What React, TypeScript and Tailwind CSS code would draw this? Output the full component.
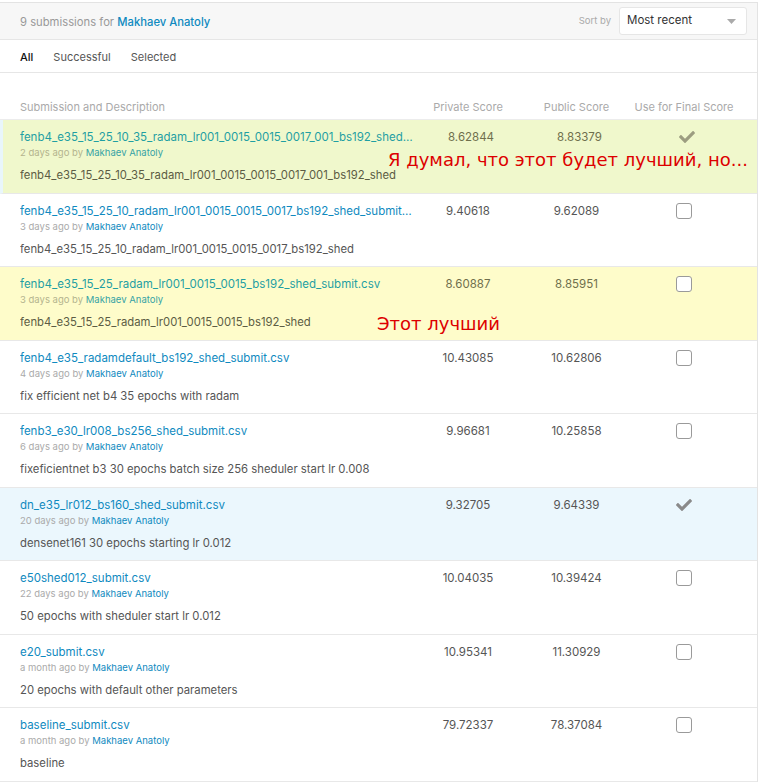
import React from "react";
import { FaCheck } from "react-icons/fa";

type Submission = {
  file: string;
  ago: string;
  description: string;
  privateScore: string;
  publicScore: string;
  selected: boolean;
  tone: "green" | "yellow" | "blue" | "none";
  note?: { text: string; className: string };
};

const submissions: Submission[] = [
  {
    file: "fenb4_e35_15_25_10_35_radam_lr001_0015_0015_0017_001_bs192_shed_submit.csv",
    ago: "2 days ago",
    description: "fenb4_e35_15_25_10_35_radam_lr001_0015_0015_0017_001_bs192_shed",
    privateScore: "8.62844",
    publicScore: "8.83379",
    selected: true,
    tone: "green",
    note: { text: "Я думал, что этот будет лучший, но...", className: "left-[385px] top-[30px]" },
  },
  {
    file: "fenb4_e35_15_25_10_radam_lr001_0015_0015_0017_bs192_shed_submit.csv",
    ago: "3 days ago",
    description: "fenb4_e35_15_25_10_radam_lr001_0015_0015_0017_bs192_shed",
    privateScore: "9.40618",
    publicScore: "9.62089",
    selected: false,
    tone: "none",
  },
  {
    file: "fenb4_e35_15_25_radam_lr001_0015_0015_bs192_shed_submit.csv",
    ago: "3 days ago",
    description: "fenb4_e35_15_25_radam_lr001_0015_0015_bs192_shed",
    privateScore: "8.60887",
    publicScore: "8.85951",
    selected: false,
    tone: "yellow",
    note: { text: "Этот лучший", className: "left-[377px] top-[47px]" },
  },
  {
    file: "fenb4_e35_radamdefault_bs192_shed_submit.csv",
    ago: "4 days ago",
    description: "fix efficient net b4 35 epochs with radam",
    privateScore: "10.43085",
    publicScore: "10.62806",
    selected: false,
    tone: "none",
  },
  {
    file: "fenb3_e30_lr008_bs256_shed_submit.csv",
    ago: "6 days ago",
    description: "fixeficientnet b3 30 epochs batch size 256 sheduler start lr 0.008",
    privateScore: "9.96681",
    publicScore: "10.25858",
    selected: false,
    tone: "none",
  },
  {
    file: "dn_e35_lr012_bs160_shed_submit.csv",
    ago: "20 days ago",
    description: "densenet161 30 epochs starting lr 0.012",
    privateScore: "9.32705",
    publicScore: "9.64339",
    selected: true,
    tone: "blue",
  },
  {
    file: "e50shed012_submit.csv",
    ago: "22 days ago",
    description: "50 epochs with sheduler start lr 0.012",
    privateScore: "10.04035",
    publicScore: "10.39424",
    selected: false,
    tone: "none",
  },
  {
    file: "e20_submit.csv",
    ago: "a month ago",
    description: "20 epochs with default other parameters",
    privateScore: "10.95341",
    publicScore: "11.30929",
    selected: false,
    tone: "none",
  },
  {
    file: "baseline_submit.csv",
    ago: "a month ago",
    description: "baseline",
    privateScore: "79.72337",
    publicScore: "78.37084",
    selected: false,
    tone: "none",
  },
];

function SubmissionRow({ s }: { s: Submission }) {
  const highlighted = s.tone === "green" || s.tone === "yellow";
  const bg =
    s.tone === "green"
      ? "bg-[#f0f8cc] border-l-[3px] border-l-[#e9f6fb]"
      : s.tone === "yellow"
      ? "bg-[#fefcca]"
      : s.tone === "blue"
      ? "bg-[#ebf7fd]"
      : "bg-white";

  return (
    <div className={`relative flex h-[73.5px] border-b border-[#e8e8e8] ${bg}`}>
      <div className={`w-[413px] min-w-0 pt-[9px] ${s.tone === "green" ? "pl-[17px]" : "pl-[20px]"}`}>
        <div
          className={`truncate text-[11.5px] leading-[16px] ${
            highlighted ? "text-[#1f9fa3]" : "text-[#0f8ac0]"
          }`}
        >
          {s.file}
        </div>
        <div className={`mt-[1px] text-[9.5px] leading-[14px] ${highlighted ? "text-[#b4b48e]" : "text-[#aaaaaa]"}`}>
          {s.ago} by{" "}
          <span className={highlighted ? "text-[#36a3a5]" : "text-[#0f8ac0]"}>Makhaev Anatoly</span>
        </div>
        <div className={`mt-[7px] truncate text-[11.3px] leading-[16px] ${highlighted ? "text-[#5c5c44]" : "text-[#555555]"}`}>
          {s.description}
        </div>
      </div>
      <div className={`w-[110px] pt-[9px] text-center text-[11.5px] leading-[16px] ${highlighted ? "text-[#6f6f4c]" : "text-[#555555]"}`}>
        {s.privateScore}
      </div>
      <div className={`w-[107px] pt-[9px] text-center text-[11.5px] leading-[16px] ${highlighted ? "text-[#6f6f4c]" : "text-[#555555]"}`}>
        {s.publicScore}
      </div>
      <div className="flex w-[107px] justify-center pt-[9px]">
        {s.selected ? (
          <FaCheck className={`h-[16px] w-[18px] ${highlighted ? "text-[#9c9d80]" : "text-[#8a8a8a]"}`} />
        ) : (
          <div className="h-[16px] w-[16px] rounded-[3px] border-[1.5px] border-[#9a9a9a] bg-white" />
        )}
      </div>
      {s.note && (
        <div
          className={`absolute whitespace-nowrap text-[18px] leading-[20px] text-[#dd0000] ${s.note.className}`}
          style={{ fontFamily: '"DejaVu Sans", sans-serif' }}
        >
          {s.note.text}
        </div>
      )}
    </div>
  );
}

export default function App() {
  return (
    <div
      className="min-h-[783px] bg-white pt-[2px]"
      style={{ fontFamily: "Inter, 'Noto Sans', sans-serif" }}
    >
      <div className="w-[758px] border-t border-r border-[#e3e3e3]">
        {/* Header */}
        <div className="flex h-[37px] items-center justify-between border-b border-[#e6e6e6] bg-[#f7f7f7] pl-[20px] pr-[10px]">
          <div className="pt-[2px] text-[11.25px] text-[#999999]">
            9 submissions for <span className="font-medium text-[#0f8ac0]">Makhaev Anatoly</span>
          </div>
          <div className="flex items-center gap-[8px]">
            <span className="text-[9.5px] text-[#aaaaaa]">Sort by</span>
            <div className="flex h-[28px] w-[128px] items-center justify-between rounded-[3px] border border-[#e6e6e6] bg-white pl-[7px] pr-[10px]">
              <span className="text-[11.5px] text-[#333333]">Most recent</span>
              <svg width="9" height="5" viewBox="0 0 9 5">
                <path d="M0 0 L9 0 L4.5 5 Z" fill="#aaaaaa" />
              </svg>
            </div>
          </div>
        </div>

        {/* Tabs */}
        <div className="flex h-[33px] items-center gap-[20px] border-b border-[#e6e6e6] pl-[20px] pt-[3px] text-[11px]">
          <span className="font-medium text-[#111111]">All</span>
          <span className="text-[#555555]">Successful</span>
          <span className="text-[#555555]">Selected</span>
        </div>

        {/* Column headings */}
        <div className="flex h-[46px] items-end pb-[4px] text-[11px] text-[#aaaaaa]">
          <div className="w-[413px] pl-[20px]">Submission and Description</div>
          <div className="w-[110px] text-center">Private Score</div>
          <div className="w-[107px] text-center">Public Score</div>
          <div className="w-[108px] text-center">Use for Final Score</div>
        </div>

        <div className="border-t border-[#ececec]">
          {submissions.map((s) => (
            <SubmissionRow key={s.file} s={s} />
          ))}
        </div>
      </div>
    </div>
  );
}
